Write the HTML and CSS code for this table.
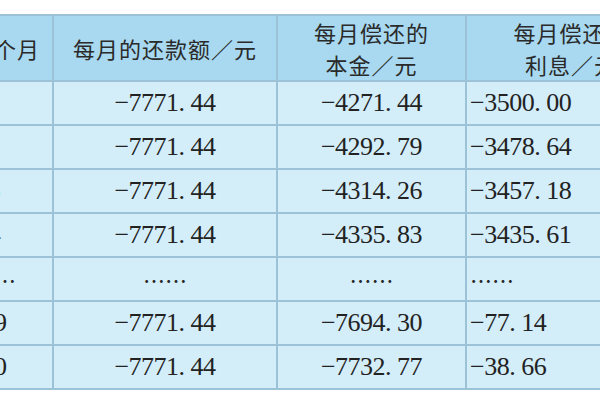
FILE: index.html
```html
<!DOCTYPE html>
<html lang="zh-CN">
<head>
<meta charset="utf-8">
<title>还款表</title>
<link rel="stylesheet" href="styles.css">
</head>
<body>
<table class="loan">
  <colgroup>
    <col class="c-month">
    <col class="c-pay">
    <col class="c-prin">
    <col class="c-int">
  </colgroup>
  <thead>
    <tr>
      <th>第几个月</th>
      <th>每月的还款额／元</th>
      <th>每月偿还的<br>本金／元</th>
      <th>每月偿还的<br>利息／元</th>
    </tr>
  </thead>
  <tbody>
    <tr><td class="num">1</td><td class="num">−7771<span class="pt">.</span>44</td><td class="num">−4271<span class="pt">.</span>44</td><td class="num left">−3500<span class="pt">.</span>00</td></tr>
    <tr><td class="num">2</td><td class="num">−7771<span class="pt">.</span>44</td><td class="num">−4292<span class="pt">.</span>79</td><td class="num left">−3478<span class="pt">.</span>64</td></tr>
    <tr><td class="num">3</td><td class="num">−7771<span class="pt">.</span>44</td><td class="num">−4314<span class="pt">.</span>26</td><td class="num left">−3457<span class="pt">.</span>18</td></tr>
    <tr><td class="num">4</td><td class="num">−7771<span class="pt">.</span>44</td><td class="num">−4335<span class="pt">.</span>83</td><td class="num left">−3435<span class="pt">.</span>61</td></tr>
    <tr><td class="dots">……</td><td class="dots">……</td><td class="dots">……</td><td class="dots left">……</td></tr>
    <tr><td class="num">59</td><td class="num">−7771<span class="pt">.</span>44</td><td class="num">−7694<span class="pt">.</span>30</td><td class="num left">−77<span class="pt">.</span>14</td></tr>
    <tr><td class="num">60</td><td class="num">−7771<span class="pt">.</span>44</td><td class="num">−7732<span class="pt">.</span>77</td><td class="num left">−38<span class="pt">.</span>66</td></tr>
  </tbody>
</table>
</body>
</html>
```

FILE: styles.css
```css
html, body {
  margin: 0;
  padding: 0;
  background: #ffffff;
  overflow: hidden;
}

.loan {
  border-collapse: collapse;
  table-layout: fixed;
  width: 741px;
  margin-top: 14px;
  margin-left: -66px;
  color: #262626;
}

.c-month { width: 118px; }
.c-pay { width: 224px; }
.c-prin { width: 189px; }
.c-int { width: 210px; }

.loan th,
.loan td {
  border: 2px solid #9cc2d8;
  padding: 0;
  text-align: center;
  vertical-align: middle;
}

.loan th {
  background: #a8d9f0;
  height: 61px;
  font-family: "Noto Sans CJK SC", "Noto Sans", sans-serif;
  font-weight: 400;
  font-size: 22px;
  line-height: 32px;
  letter-spacing: 1px;
  color: #2a2a2a;
}

.loan td {
  background: #d3edf9;
  height: 42px;
}

.num {
  font-family: "Liberation Serif", "DejaVu Serif", serif;
  font-size: 26px;
  line-height: 26px;
  letter-spacing: -0.5px;
  color: #222222;
}

.pt {
  display: inline-block;
  width: 12px;
  text-align: left;
}

.dots {
  font-family: "Noto Sans CJK SC", sans-serif;
  font-size: 22px;
  line-height: 24px;
}

.loan td.left {
  text-align: left;
  padding-left: 3px;
}
```
